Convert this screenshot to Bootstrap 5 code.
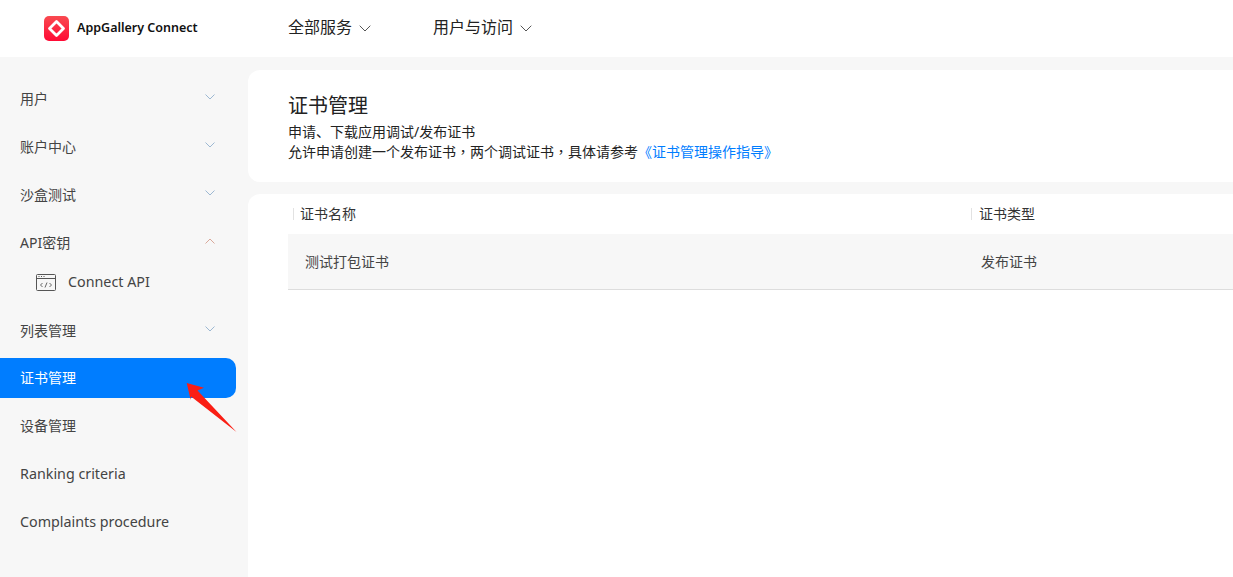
<!doctype html>
<html lang="zh">
<head>
<meta charset="utf-8">
<title>证书管理</title>
<link href="https://cdn.jsdelivr.net/npm/bootstrap@5.3.0/dist/css/bootstrap.min.css" rel="stylesheet">
<style>
html,body{height:577px;overflow:hidden}
body{background:#f7f7f7;font-family:"Noto Sans","Noto Sans CJK SC",sans-serif;font-size:14px;color:#2c2c2c}
.topbar{height:57px;background:#fff;padding-left:44px}
.brand-box{width:244px;gap:8px}
.brand-name{font-size:12.5px;font-weight:600;color:#111}
.top-link{font-size:16px;color:#222;gap:7px;width:145px;padding-bottom:3px}
.top-link svg{margin-top:3px}
.main-area{height:520px}
.side{width:248px;padding-top:17px;position:relative;flex:none}
.side-item{height:48px;padding:0 33px 0 20px;color:#444;font-size:14px}
.side-item.sub{height:30px;padding-left:36px;gap:12px;margin-bottom:10px}
.side-item.on{height:40px;background:#007dff;color:#fff;width:236px;border-radius:0 10px 10px 0;margin:4px 0 3px;padding-bottom:2px}
.side-item svg.chev{margin-bottom:3px}
.latin-text{font-size:14.3px;padding-top:2px}
.content-col{padding-top:13px;gap:12px;min-width:0}
.head-card{height:112px;background:#fff;border-radius:12px 0 0 12px;padding:22px 40px}
.head-title{font-size:20px;line-height:27px;color:#222;margin-bottom:3px}
.head-line{line-height:20px;color:#222;font-size:14px}
.head-line a{color:#007dff;text-decoration:none}
.mid-comma{font-family:"Noto Sans CJK TC",sans-serif;line-height:1}
.list-card{background:#fff;border-radius:12px 0 0 0;padding:0 0 0 40px}
.col-name{width:683px}
.col-head{height:40px;color:#333;font-size:14px;padding-bottom:2px}
.col-head span{border-left:1px solid #e2e2e2;padding-left:7px;line-height:12px;display:inline-block}
.col-head .col-name span{margin-left:5px;padding-left:6px}
.col-row{height:56px;background:#f7f7f7;border-bottom:1px solid #ddd;color:#444;font-size:14px}
.col-row .col-name{padding-left:17px}
.col-row .col-name + div{padding-left:10px}
.arrow-mark{position:absolute;left:186px;top:380px}
</style>
</head>
<body>
<nav class="topbar d-flex align-items-center">
  <div class="brand-box d-flex align-items-center">
    <svg width="25" height="25" viewBox="0 0 25 25"><defs><linearGradient id="lg" x1="0" y1="0" x2="0" y2="1"><stop offset="0" stop-color="#f94a50"/><stop offset="1" stop-color="#ff0a35"/></linearGradient></defs><rect width="25" height="25" rx="5" fill="url(#lg)"/><path d="M12.5 5.500 19.500 12.500 12.500 19.500 5.500 12.500Z" fill="none" stroke="#fff" stroke-width="2.800" stroke-linejoin="round"/></svg>
    <span class="brand-name">AppGallery Connect</span>
  </div>
  <div class="top-link d-flex align-items-center">全部服务
    <svg width="12" height="7" viewBox="0 0 12 7"><path d="M.7.7 6 6 11.3.7" fill="none" stroke="#555" stroke-width="1"/></svg></div>
  <div class="top-link d-flex align-items-center">用户与访问
    <svg width="12" height="7" viewBox="0 0 12 7"><path d="M.7.7 6 6 11.3.7" fill="none" stroke="#555" stroke-width="1"/></svg></div>
</nav>
<div class="main-area d-flex">
  <aside class="side">
    <div class="side-item d-flex align-items-center justify-content-between">用户<svg class="chev" width="10" height="6" viewBox="0 0 10 6"><path d="M.5.5 5 5 9.500.5" fill="none" stroke="#9db8d2"/></svg></div>
    <div class="side-item d-flex align-items-center justify-content-between">账户中心<svg class="chev" width="10" height="6" viewBox="0 0 10 6"><path d="M.5.5 5 5 9.500.5" fill="none" stroke="#9db8d2"/></svg></div>
    <div class="side-item d-flex align-items-center justify-content-between">沙盒测试<svg class="chev" width="10" height="6" viewBox="0 0 10 6"><path d="M.5.5 5 5 9.500.5" fill="none" stroke="#9db8d2"/></svg></div>
    <div class="side-item d-flex align-items-center justify-content-between">API密钥<svg class="chev" width="10" height="6" viewBox="0 0 10 6"><path d="M.5 5.500 5 1 9.500 5.500" fill="none" stroke="#d9a89a"/></svg></div>
    <div class="side-item sub latin-text d-flex align-items-center"><svg width="20" height="17" viewBox="0 0 20 17"><rect x=".5" y=".5" width="19" height="16" rx="1" fill="none" stroke="#555"/><path d="M1 4.500H19" stroke="#555"/><path d="M2.500 2.500h1M5 2.500h1M7.500 2.500h1" stroke="#555"/><path d="M6.500 9 4.500 11 6.500 13M13.500 9 15.500 11 13.500 13M11 8.500 9 13.500" fill="none" stroke="#555" stroke-width=".9"/></svg>Connect API</div>
    <div class="side-item d-flex align-items-center justify-content-between">列表管理<svg class="chev" width="10" height="6" viewBox="0 0 10 6"><path d="M.5.5 5 5 9.500.5" fill="none" stroke="#9db8d2"/></svg></div>
    <div class="side-item on d-flex align-items-center">证书管理</div>
    <div class="side-item d-flex align-items-center">设备管理</div>
    <div class="side-item latin-text d-flex align-items-center">Ranking criteria</div>
    <div class="side-item latin-text d-flex align-items-center">Complaints procedure</div>
  </aside>
  <main class="content-col flex-grow-1 d-flex flex-column">
    <section class="head-card">
      <div class="head-title">证书管理</div>
      <div class="head-line">申请、下载应用调试/发布证书</div>
      <div class="head-line">允许申请创建一个发布证书<span class="mid-comma" lang="zh-Hant">，</span>两个调试证书<span class="mid-comma" lang="zh-Hant">，</span>具体请参考<a href="#">《证书管理操作指导》</a></div>
    </section>
    <section class="list-card flex-grow-1">
      <div class="col-head d-flex align-items-center"><div class="col-name"><span>证书名称</span></div><div><span>证书类型</span></div></div>
      <div class="col-row d-flex align-items-center"><div class="col-name">测试打包证书</div><div>发布证书</div></div>
    </section>
  </main>
</div>
<svg class="arrow-mark" width="52" height="55" viewBox="0 0 52 55"><path d="M.7 3 18 7.700 11.500 10.500 50.500 52 5 16.500 4.700 20Z" fill="#fa1e14"/></svg>
<script src="https://cdn.jsdelivr.net/npm/bootstrap@5.3.0/dist/js/bootstrap.bundle.min.js"></script>
</body>
</html>
